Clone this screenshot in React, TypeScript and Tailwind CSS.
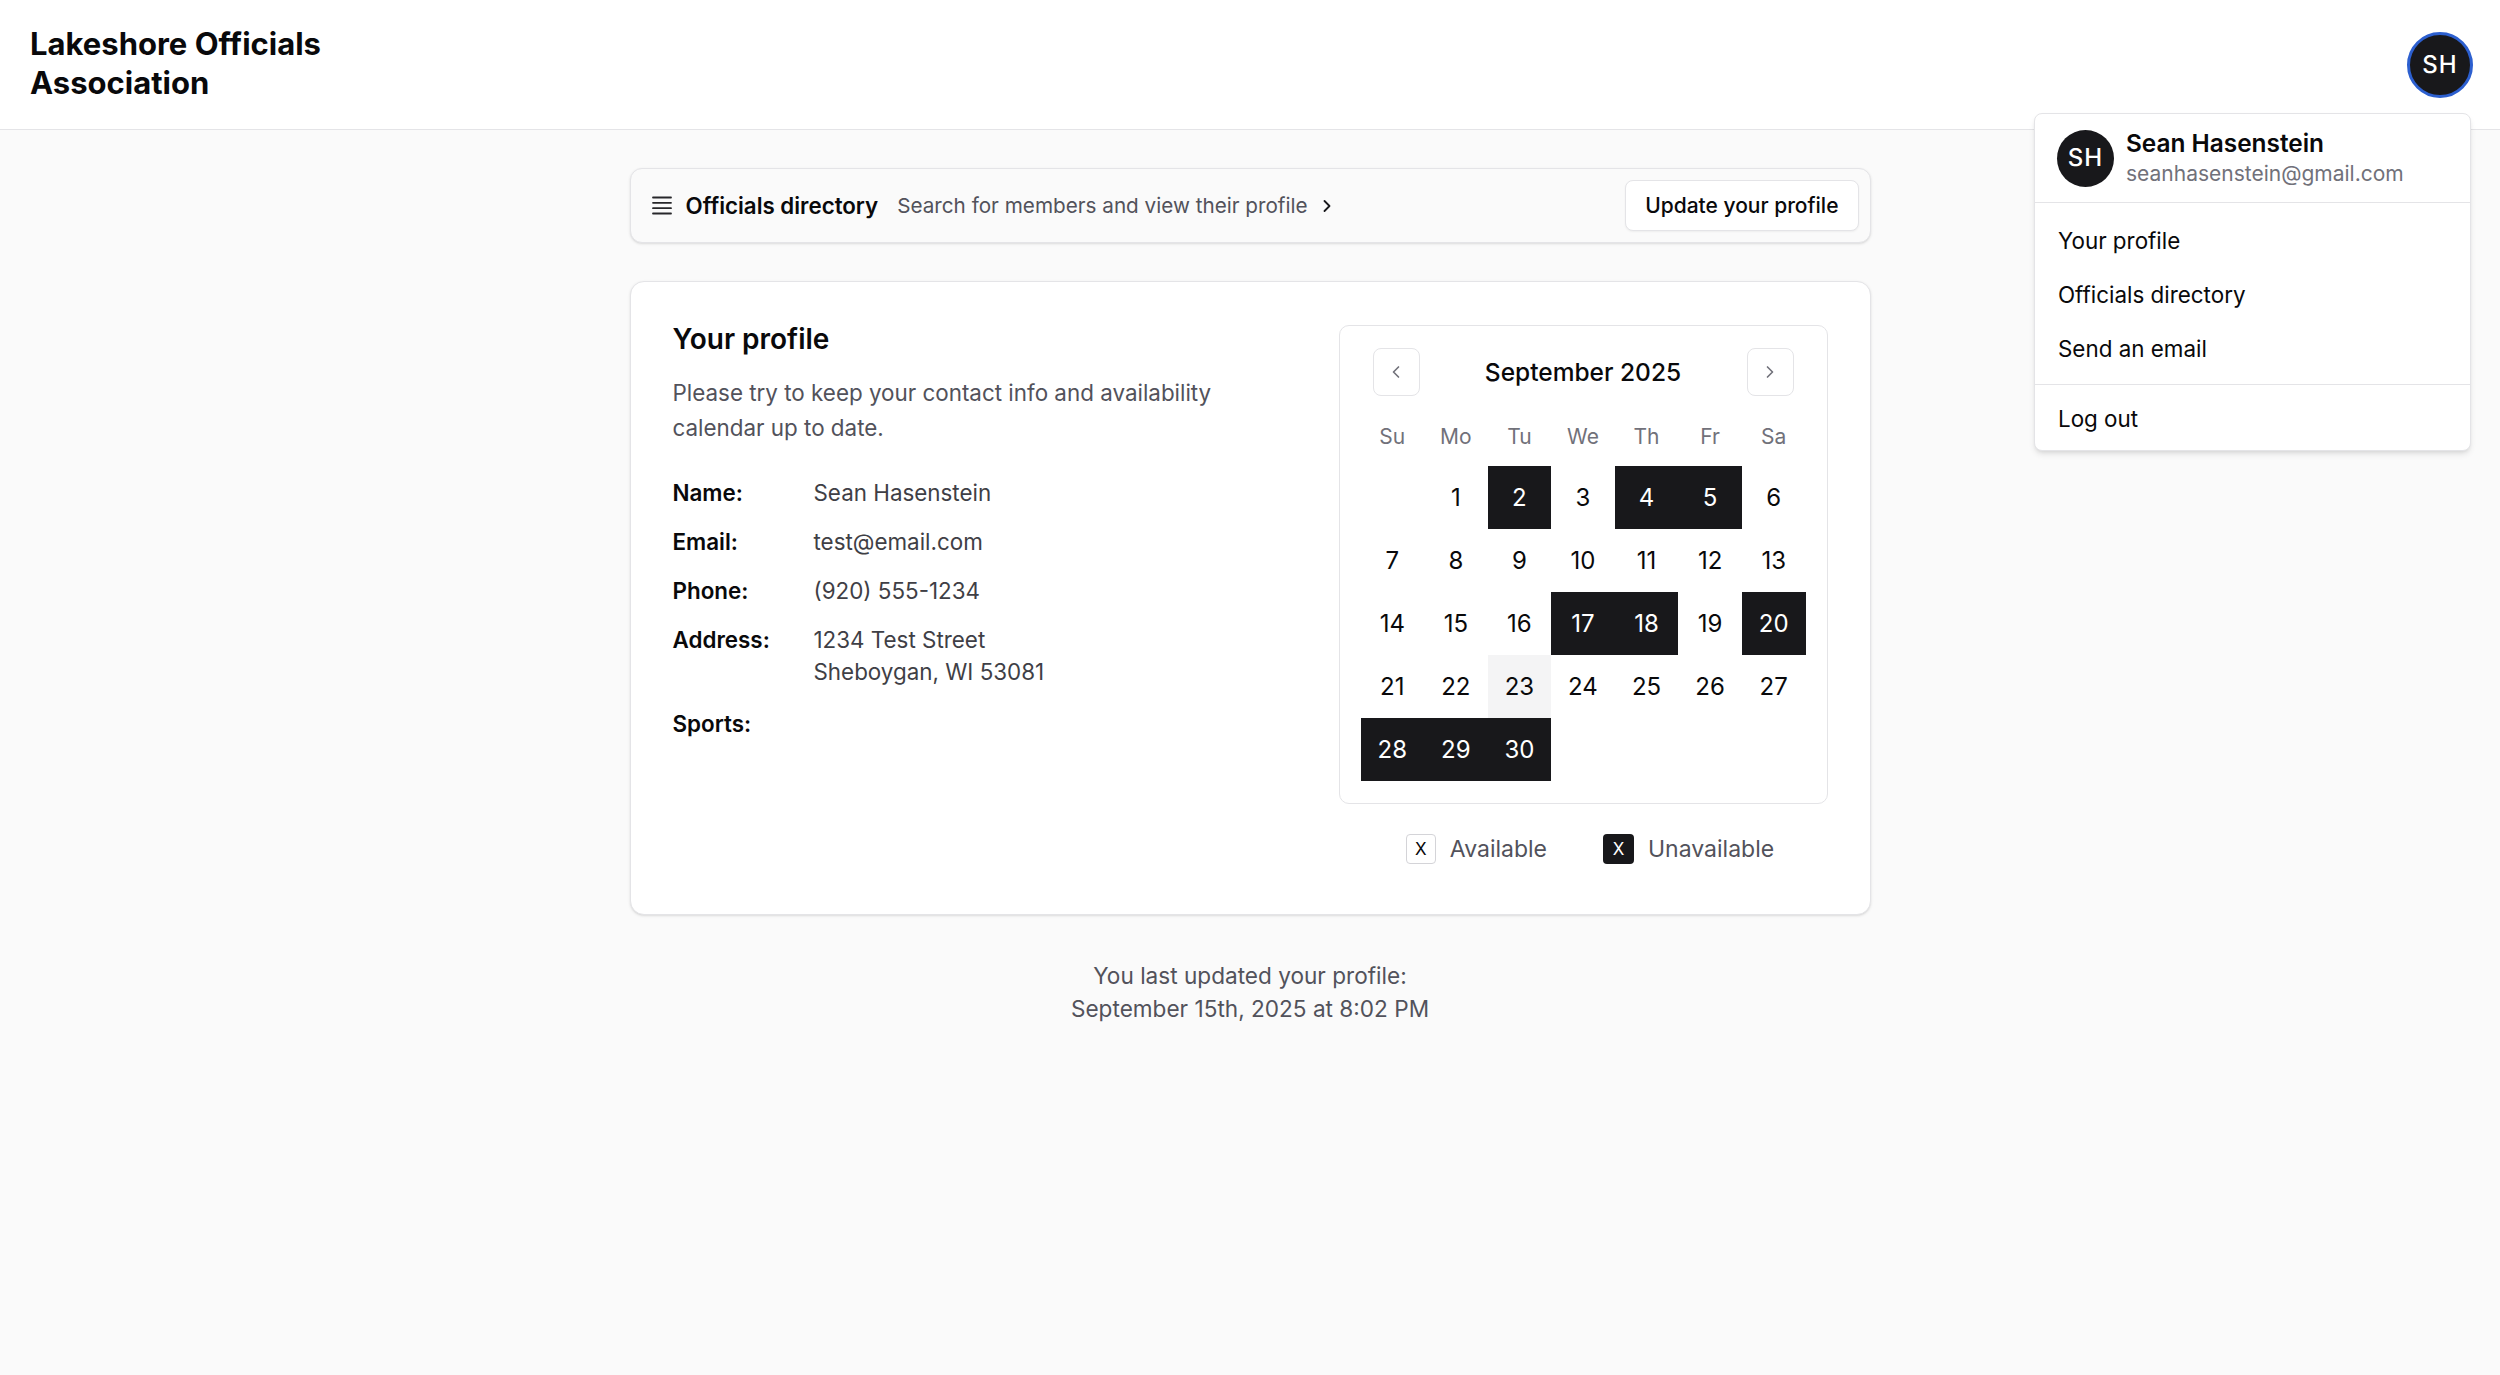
import { ChevronLeft, ChevronRight } from "lucide-react";

const WEEKDAYS = ["Su", "Mo", "Tu", "We", "Th", "Fr", "Sa"];
const UNAVAILABLE = [2, 4, 5, 17, 18, 20, 28, 29, 30];
const TODAY = 23;

// september 2025 starts on a monday
const CELLS: (number | null)[] = [null, ...Array.from({ length: 30 }, (_, i) => i + 1)];

function BarsIcon() {
  return (
    <svg width="20" height="19" viewBox="0 0 20 19" fill="none" stroke="#27272a" strokeWidth="1.8" strokeLinecap="round">
      <line x1="1" y1="1.5" x2="19" y2="1.5" />
      <line x1="1" y1="6.8" x2="19" y2="6.8" />
      <line x1="1" y1="12.2" x2="19" y2="12.2" />
      <line x1="1" y1="17.5" x2="19" y2="17.5" />
    </svg>
  );
}

function Calendar() {
  return (
    <div className="rounded-[10px] border border-[#e4e4e7] bg-white px-[21px] pt-[22px] pb-[22px]">
      <div className="flex h-[48px] items-center justify-between px-[12px]">
        <button className="flex h-[48px] w-[47px] items-center justify-center rounded-[8px] border border-[#e4e4e7] bg-white">
          <ChevronLeft size={20} strokeWidth={2} className="text-[#71717a]" />
        </button>
        <span className="text-[24.5px] font-medium leading-[32px] text-[#09090b]">September 2025</span>
        <button className="flex h-[48px] w-[47px] items-center justify-center rounded-[8px] border border-[#e4e4e7] bg-white">
          <ChevronRight size={20} strokeWidth={2} className="text-[#71717a]" />
        </button>
      </div>

      <div className="mt-[16px] grid h-[50px] grid-cols-7 items-center">
        {WEEKDAYS.map((d) => (
          <span key={d} className="text-center text-[21px] text-[#71717a]">
            {d}
          </span>
        ))}
      </div>

      <div className="mt-[4px] grid grid-cols-7">
        {CELLS.map((day, i) => {
          if (day === null) return <div key={`e${i}`} className="h-[63px]" />;
          const off = UNAVAILABLE.includes(day);
          const today = day === TODAY;
          return (
            <div
              key={day}
              className={
                off
                  ? "flex h-[63px] items-center justify-center bg-[#18181b] text-[24px] text-white"
                  : today
                  ? "flex h-[63px] items-center justify-center bg-[#f4f4f5] text-[24px] text-[#09090b]"
                  : "flex h-[63px] items-center justify-center text-[24px] text-[#09090b]"
              }
            >
              {day}
            </div>
          );
        })}
      </div>
    </div>
  );
}

function Field({ label, children, className = "" }: { label: string; children?: React.ReactNode; className?: string }) {
  return (
    <div className={`flex text-[22.4px] leading-[32px] ${className}`}>
      <span className="w-[141px] shrink-0 font-semibold text-[#09090b]">{label}</span>
      <div className="text-[#3f3f46]">{children}</div>
    </div>
  );
}

export default function App() {
  return (
    <div className="relative min-h-screen bg-[#fafafa] font-['Inter','Liberation_Sans',sans-serif] text-[#09090b]">
      <header className="flex h-[130px] items-center justify-between border-b border-[#e4e4e7] bg-white pl-[30px] pr-[27px]">
        <h1 className="pb-[4px] text-[31px] font-bold leading-[39px]">
          Lakeshore Officials
          <br />
          Association
        </h1>
        <div className="flex h-[66px] w-[66px] items-center justify-center rounded-full border-[3px] border-[#2c5fcf] bg-[#18181b] text-[24px] font-medium tracking-[0.04em] text-white">
          SH
        </div>
      </header>

      {/* account menu */}
      <div className="absolute right-[29px] top-[113px] w-[437px] overflow-hidden rounded-[8px] border border-[#e4e4e7] bg-white shadow-md">
        <div className="flex h-[88px] items-center gap-[12px] pl-[22px]">
          <div className="flex h-[57px] w-[57px] items-center justify-center rounded-full bg-[#18181b] text-[24px] font-medium tracking-[0.04em] text-white">
            SH
          </div>
          <div>
            <p className="text-[24.4px] font-semibold leading-[32px]">Sean Hasenstein</p>
            <p className="text-[21px] leading-[30px] text-[#71717a]">seanhasenstein@gmail.com</p>
          </div>
        </div>
        <div className="border-t border-[#e4e4e7] pt-[11px] pb-[8px]">
          {["Your profile", "Officials directory", "Send an email"].map((item) => (
            <div key={item} className="flex h-[54px] items-center pl-[23px] text-[22.4px]">
              {item}
            </div>
          ))}
        </div>
        <div className="border-t border-[#e4e4e7] pt-[7px] pb-[4px]">
          <div className="flex h-[54px] items-center pl-[23px] text-[22.4px]">Log out</div>
        </div>
      </div>

      <main className="mx-auto w-[1241px] pt-[38px] pb-[40px]">
        <div className="flex h-[75px] items-center justify-between rounded-[12px] border border-[#e4e4e7] bg-[#fafafa] pl-[21px] pr-[11px] shadow-sm">
          <div className="flex items-center">
            <BarsIcon />
            <span className="ml-[14px] text-[22.3px] font-semibold">Officials directory</span>
            <span className="ml-[19px] text-[20.7px] text-[#52525b]">Search for members and view their profile</span>
            <ChevronRight size={20} strokeWidth={2.2} className="ml-[9px] text-[#18181b]" />
          </div>
          <button className="flex h-[51px] items-center rounded-[8px] border border-[#e4e4e7] bg-white px-[19px] text-[21px] font-medium shadow-xs">
            Update your profile
          </button>
        </div>

        <div className="mt-[38px] flex justify-between rounded-[14px] border border-[#e4e4e7] bg-white px-[42px] pt-[43px] pb-[50px] shadow-sm">
          <div className="flex-1">
            <h2 className="text-[28px] font-semibold leading-none">Your profile</h2>
            <p className="mt-[22px] max-w-[560px] text-[22.4px] leading-[35px] text-[#52525b]">
              Please try to keep your contact info and availability calendar up to date.
            </p>
            <div className="mt-[32px] flex flex-col gap-[17px]">
              <Field label="Name:">Sean Hasenstein</Field>
              <Field label="Email:">test@email.com</Field>
              <Field label="Phone:">(920) 555-1234</Field>
              <Field label="Address:">
                1234 Test Street
                <br />
                Sheboygan, WI 53081
              </Field>
              <Field label="Sports:" className="mt-[3px]" />
            </div>
          </div>

          <div className="w-[489px] shrink-0">
            <Calendar />
            <div className="ml-[14px] mt-[30px] flex h-[30px] items-center justify-center gap-[56px]">
              <div className="flex items-center gap-[14px]">
                <span className="flex h-[30px] w-[30px] items-center justify-center rounded-[4px] border border-[#d4d4d8] bg-white text-[17px] leading-none text-[#09090b]">
                  X
                </span>
                <span className="text-[23px] leading-[30px] text-[#52525b]">Available</span>
              </div>
              <div className="flex items-center gap-[14px]">
                <span className="flex h-[30px] w-[31px] items-center justify-center rounded-[4px] bg-[#18181b] text-[17px] leading-none text-white">
                  X
                </span>
                <span className="text-[23px] leading-[30px] text-[#52525b]">Unavailable</span>
              </div>
            </div>
          </div>
        </div>

        <p className="mt-[44px] text-center text-[22.6px] leading-[33px] text-[#52525b]">
          You last updated your profile:
          <br />
          September 15th, 2025 at 8:02 PM
        </p>
      </main>
    </div>
  );
}
